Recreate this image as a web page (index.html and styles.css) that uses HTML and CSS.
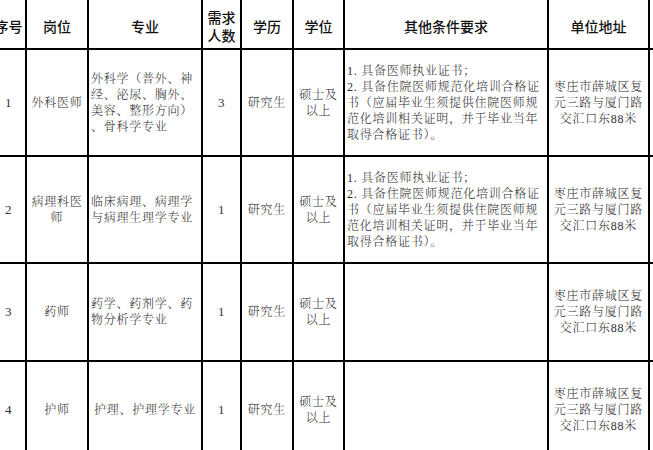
FILE: index.html
```html
<!DOCTYPE html>
<html lang="zh-CN">
<head>
<meta charset="utf-8">
<title>岗位表</title>
<link rel="stylesheet" href="styles.css">
</head>
<body>
<div class="sheet">
  <div class="cell head">序号</div>
  <div class="cell head">岗位</div>
  <div class="cell head">专业</div>
  <div class="cell head">需求<br>人数</div>
  <div class="cell head">学历</div>
  <div class="cell head">学位</div>
  <div class="cell head">其他条件要求</div>
  <div class="cell head">单位地址</div>
  <div class="cell last"></div>

  <div class="cell num">1</div>
  <div class="cell">外科医师</div>
  <div class="cell left">外科学（普外、神<br>经、泌尿、胸外、<br>美容、整形方向）<br>、骨科学专业</div>
  <div class="cell num">3</div>
  <div class="cell">研究生</div>
  <div class="cell">硕士及<br>以上</div>
  <div class="cell left">1. 具备医师执业证书；<br>2. 具备住院医师规范化培训合格证<br>书（应届毕业生须提供住院医师规<br>范化培训相关证明，并于毕业当年<br>取得合格证书）。</div>
  <div class="cell">枣庄市薛城区复<br>元三路与厦门路<br>交汇口东88米</div>
  <div class="cell last"></div>

  <div class="cell num">2</div>
  <div class="cell">病理科医<br>师</div>
  <div class="cell left">临床病理、病理学<br>与病理生理学专业</div>
  <div class="cell num">1</div>
  <div class="cell">研究生</div>
  <div class="cell">硕士及<br>以上</div>
  <div class="cell left">1. 具备医师执业证书；<br>2. 具备住院医师规范化培训合格证<br>书（应届毕业生须提供住院医师规<br>范化培训相关证明，并于毕业当年<br>取得合格证书）。</div>
  <div class="cell">枣庄市薛城区复<br>元三路与厦门路<br>交汇口东88米</div>
  <div class="cell last"></div>

  <div class="cell num">3</div>
  <div class="cell">药师</div>
  <div class="cell left">药学、药剂学、药<br>物分析学专业</div>
  <div class="cell num">1</div>
  <div class="cell">研究生</div>
  <div class="cell">硕士及<br>以上</div>
  <div class="cell left"></div>
  <div class="cell">枣庄市薛城区复<br>元三路与厦门路<br>交汇口东88米</div>
  <div class="cell last"></div>

  <div class="cell num">4</div>
  <div class="cell">护师</div>
  <div class="cell">护理、护理学专业</div>
  <div class="cell num">1</div>
  <div class="cell">研究生</div>
  <div class="cell">硕士及<br>以上</div>
  <div class="cell left"></div>
  <div class="cell">枣庄市薛城区复<br>元三路与厦门路<br>交汇口东88米</div>
  <div class="cell last"></div>
</div>
</body>
</html>
```
FILE: styles.css
```css
html, body {
  margin: 0;
  padding: 0;
  background: #fff;
  overflow: hidden;
}

.sheet {
  display: grid;
  grid-template-columns: 35px 62px 114px 39px 52px 51px 204px 101px 60px;
  grid-template-rows: 50px 107px 107px 98px 97px;
  width: 718px;
  margin-left: -8px;
  font-family: "Liberation Serif", "Noto Serif CJK SC", "Noto Sans CJK SC", serif;
  font-size: 12px;
  line-height: 16px;
  letter-spacing: 0.75px;
  color: #2e2e2e;
  font-weight: 300;
}

.cell {
  box-sizing: border-box;
  border-right: 2px solid #000;
  border-bottom: 2px solid #000;
  display: flex;
  align-items: center;
  justify-content: center;
  text-align: center;
  padding: 0 1px;
  white-space: nowrap;
}

.cell.left {
  justify-content: flex-start;
  text-align: left;
  padding-left: 2px;
}

.cell.num {
  font-size: 13px;
  font-weight: 400;
  color: #333;
}

.cell.head {
  font-family: "Noto Sans CJK SC", "Liberation Sans", sans-serif;
  font-size: 14px;
  line-height: 18px;
  letter-spacing: 0;
  font-weight: 500;
  color: #111;
  padding-top: 4px;
}

.cell.last {
  border-right: none;
}
```
